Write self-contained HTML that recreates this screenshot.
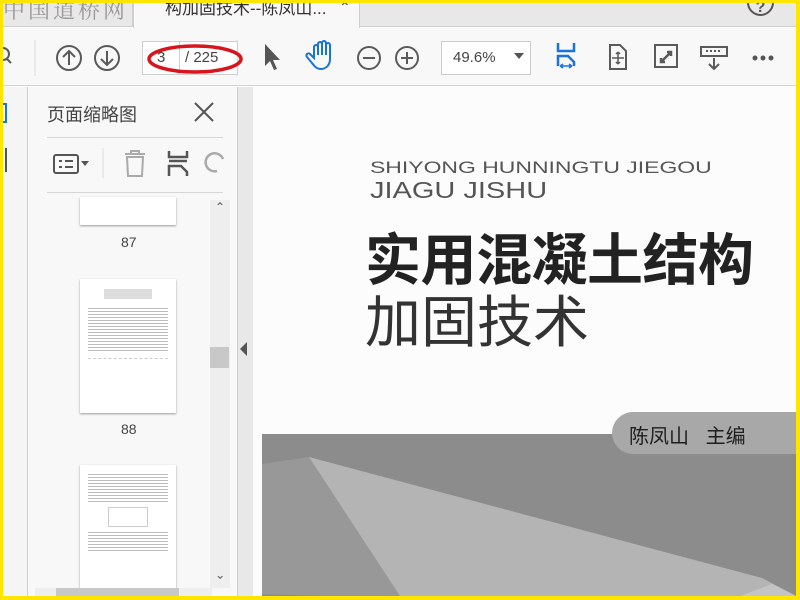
<!DOCTYPE html>
<html><head><meta charset="utf-8"><style>
*{margin:0;padding:0;box-sizing:border-box}
body{width:800px;height:600px;overflow:hidden;background:#ffe600;position:relative;font-family:"Liberation Sans","Noto Sans CJK SC",sans-serif}
.a{position:absolute}
</style></head><body>
<div class="a" style="left:3px;top:3px;width:793px;height:593px;background:#fff;overflow:hidden">
 <!-- tab bar -->
 <div class="a" style="left:0;top:0;width:793px;height:24px;background:#e8e8e8;border-bottom:1px solid #cfcfcf"></div>
 <div class="a" style="left:-2px;top:-4px;width:132px;height:28px;border-right:1px solid #cfcfcf;color:#999;font-size:22px;font-family:'Noto Serif CJK SC',serif;letter-spacing:3px;padding-left:2px;line-height:22px">中国道桥网</div>
 <div class="a" style="left:130px;top:0;width:227px;height:25px;background:#f8f8f8;border-left:1px solid #cfcfcf;border-right:1px solid #cfcfcf"></div>
 <div class="a" style="left:162px;top:-9px;font-size:17px;color:#333;white-space:nowrap">构加固技术--陈凤山...</div>
 <div class="a" style="left:336px;top:-4px;font-size:14px;color:#444">⌃</div>
 <div class="a" style="left:744px;top:-14px;width:27px;height:27px;border:2px solid #555;border-radius:50%;text-align:center;font-size:16px;line-height:34px;color:#555;font-weight:bold">?</div>
 <!-- toolbar -->
 <div class="a" style="left:0;top:25px;width:793px;height:58px;background:#f8f8f8;border-bottom:1px solid #d4d4d4"></div>
 <svg class="a" style="left:0;top:25px" width="793" height="58">
  <g fill="none" stroke="#5a5a5a" stroke-width="2">
   <circle cx="0" cy="26" r="6"/><line x1="4" y1="31" x2="8" y2="35"/>
   <circle cx="66" cy="30" r="12"/><path d="M66 37V23M60 29l6-6 6 6"/>
   <circle cx="104" cy="30" r="12"/><path d="M104 23V37M98 31l6 6 6-6"/>
   <circle cx="366" cy="30" r="11"/><path d="M360 30h12"/>
   <circle cx="404" cy="30" r="11"/><path d="M398 30h12M404 24v12"/>
   <path d="M607 17h10l6 6v18h-16z"/><path d="M615 24v12M609 30h12M615 24l-2 2M615 24l2 2M615 36l-2-2M615 36l2-2" stroke-width="1.5"/>
   <rect x="652" y="17" width="22" height="22"/><path d="M658 34l10-10M664 24h4v4M658 30v4h4" stroke-width="2.5"/>
   <rect x="698" y="19" width="26" height="9"/><path d="M711 30v11M706 36l5 5 5-5"/>
  </g>
  <line x1="32" y1="12" x2="32" y2="48" stroke="#ddd"/>
  <line x1="234" y1="12" x2="234" y2="48" stroke="#ddd"/>
  <path d="M262 16v22l5-5 4 9 3-1-4-9h7z" fill="#555"/>
  <path d="M311 30v-11a2 2 0 0 1 4 0v8v-11a2 2 0 0 1 4 0v11v-12a2 2 0 0 1 4 0v12v-10a2 2 0 0 1 4 0v14c0 6-4 10-9 10c-4 0-6-2-9-6l-5-6a2 2 0 0 1 3-3z" fill="none" stroke="#1a73d9" stroke-width="2"/>
  <path d="M555 15v8h16v-8M555 38v-10h10l6 6v4" fill="none" stroke="#1a73d9" stroke-width="2.5"/>
  <path d="M557 38h12M557 38l3-2M557 38l3 2M569 38l-3-2M569 38l-3 2" stroke="#1a73d9" stroke-width="1.5"/>
  <g fill="#555"><circle cx="752" cy="30" r="2.5"/><circle cx="760" cy="30" r="2.5"/><circle cx="768" cy="30" r="2.5"/></g>
  <g fill="#555"><rect x="703" y="22" width="2" height="2"/><rect x="707" y="22" width="2" height="2"/><rect x="711" y="22" width="2" height="2"/><rect x="715" y="22" width="2" height="2"/></g>
 </svg>
 <div class="a" style="left:139px;top:38px;width:96px;height:34px;background:#fff;border:1px solid #d0d0d0"></div>
 <div class="a" style="left:176px;top:38px;width:1px;height:34px;background:#d0d0d0"></div>
 <div class="a" style="left:154px;top:46px;font-size:15px;color:#444">3</div>
 <div class="a" style="left:182px;top:46px;font-size:15px;color:#444">/ 225</div>
 <svg class="a" style="left:140px;top:36px" width="104" height="40"><ellipse cx="52" cy="20" rx="46" ry="13" fill="none" stroke="#d8141c" stroke-width="3.5"/></svg>
 <div class="a" style="left:438px;top:38px;width:90px;height:34px;background:#fff;border:1px solid #ccc"></div>
 <div class="a" style="left:450px;top:46px;font-size:15px;color:#444">49.6%</div>
 <div class="a" style="left:511px;top:50px;border:5px solid transparent;border-top:6px solid #555"></div>
 <!-- left strip -->
 <div class="a" style="left:0;top:84px;width:25px;height:509px;background:#f5f5f5;border-right:1px solid #cfcfcf"></div>
 <div class="a" style="left:-6px;top:100px;width:10px;height:20px;border:2px solid #1a73d9"></div>
 <div class="a" style="left:2px;top:145px;width:2px;height:24px;background:#555"></div>
 <!-- panel -->
 <div class="a" style="left:25px;top:84px;width:210px;height:509px;background:#f8f8f8"></div>
 <div class="a" style="left:44px;top:98px;font-size:18px;color:#444">页面缩略图</div>
 <svg class="a" style="left:190px;top:98px" width="22" height="22"><path d="M2 2l18 18M20 2L2 20" stroke="#555" stroke-width="2"/></svg>
 <div class="a" style="left:44px;top:134px;width:176px;height:1px;background:#d6d6d6"></div>
 <svg class="a" style="left:44px;top:142px" width="180" height="36">
  <rect x="7" y="10" width="24" height="18" rx="2" fill="none" stroke="#555" stroke-width="2"/>
  <path d="M12 16h3M12 22h3M18 16h8M18 22h8" stroke="#555" stroke-width="2"/><path d="M34 16h8l-4 5z" fill="#555"/>
  <line x1="56" y1="3" x2="56" y2="33" stroke="#ddd"/>
  <path d="M78 9h20M84 9v-3h8v3M80 12h16l-1 19h-14z" fill="none" stroke="#aaa" stroke-width="2"/>
  <path d="M122 6v6h18v-6M122 16h18M122 31v-10h12l6 6v4" fill="none" stroke="#555" stroke-width="2.5"/>
  <path d="M170 26a9 9 0 1 1 6-12" fill="none" stroke="#aaa" stroke-width="2.5"/>
 </svg>
 <div class="a" style="left:44px;top:189px;width:176px;height:1px;background:#d6d6d6"></div>
 <!-- thumbnails -->
 <div class="a" style="left:77px;top:194px;width:96px;height:28px;background:#fff;box-shadow:0 1px 2px #999"></div>
 <div class="a" style="left:118px;top:231px;font-size:14px;color:#444">87</div>
 <div class="a" style="left:77px;top:276px;width:96px;height:134px;background:#fff;box-shadow:0 1px 2px #999;padding:10px 8px;font-size:3px;color:#999">
  <div style="height:10px;margin:0 16px 8px;background:#ddd"></div>
  <div style="height:45px;background:repeating-linear-gradient(#fff 0 1px,#bbb 1px 2px,#fff 2px 3px)"></div>
  <div style="height:50px;margin-top:6px;border-top:1px dashed #ccc"></div>
 </div>
 <div class="a" style="left:118px;top:418px;font-size:14px;color:#444">88</div>
 <div class="a" style="left:77px;top:462px;width:96px;height:131px;background:#fff;box-shadow:0 1px 2px #999;padding:8px 8px">
  <div style="height:30px;background:repeating-linear-gradient(#fff 0 1px,#bbb 1px 2px,#fff 2px 3px)"></div>
  <div style="height:20px;margin:4px 20px;border:1px solid #ccc"></div>
  <div style="height:22px;background:repeating-linear-gradient(#fff 0 1px,#bbb 1px 2px,#fff 2px 3px)"></div>
 </div>
 <!-- scrollbars -->
 <div class="a" style="left:207px;top:197px;width:20px;height:388px;background:#eee"></div>
 <div class="a" style="left:207px;top:344px;width:19px;height:21px;background:#c8c8c8"></div>
 <div class="a" style="left:212px;top:197px;font-size:12px;color:#555">⌃</div>
 <div class="a" style="left:212px;top:564px;font-size:12px;color:#555;transform:rotate(180deg)">⌃</div>
 <div class="a" style="left:32px;top:585px;width:177px;height:10px;background:#eee"></div>
 <div class="a" style="left:53px;top:585px;width:123px;height:10px;background:#c8c8c8"></div>
 <!-- splitter -->
 <div class="a" style="left:234px;top:84px;width:16px;height:509px;background:#e8e8e8;border-left:1px solid #cfcfcf"></div>
 <div class="a" style="left:237px;top:339px;border:7px solid transparent;border-right:7px solid #555;border-left:0"></div>
 <!-- document -->
 <div class="a" style="left:250px;top:84px;width:543px;height:509px;background:#fcfcfc"></div>
 <div class="a" style="left:367px;top:155px;font-size:17px;color:#555;white-space:nowrap;transform:scaleX(1.35);transform-origin:0 0">SHIYONG HUNNINGTU JIEGOU</div>
 <div class="a" style="left:367px;top:174px;font-size:23px;color:#555;white-space:nowrap;transform:scaleX(1.26);transform-origin:0 0">JIAGU JISHU</div>
 <div class="a" style="left:362px;top:224px;font-size:56px;line-height:60px;font-weight:bold;color:#222;font-family:'Noto Sans CJK SC',sans-serif;white-space:nowrap;letter-spacing:-0.5px">实用混凝土结构</div>
 <div class="a" style="left:362px;top:286px;font-size:56px;line-height:60px;color:#333;font-family:'Noto Sans CJK SC',sans-serif;font-weight:400;white-space:nowrap">加固技术</div>
 <svg class="a" style="left:259px;top:431px" width="540" height="165">
  <rect width="540" height="165" fill="#8c8c8c"/>
  <polygon points="0,30 47,23 480,150 540,165 150,165 0,160" fill="#989898"/>
  <polygon points="47,23 500,144 540,165 140,165" fill="#b4b4b4"/>
  <polygon points="510,150 540,165 470,165" fill="#c4c4c4"/>
 </svg>
 <div class="a" style="left:609px;top:409px;width:190px;height:42px;background:#a8a8a8;border-radius:21px 0 0 21px"></div>
 <div class="a" style="left:626px;top:417px;font-size:20px;color:#1e1e1e;white-space:nowrap">陈凤山&nbsp;&nbsp;&nbsp;主编</div>
</div>
</body></html>
